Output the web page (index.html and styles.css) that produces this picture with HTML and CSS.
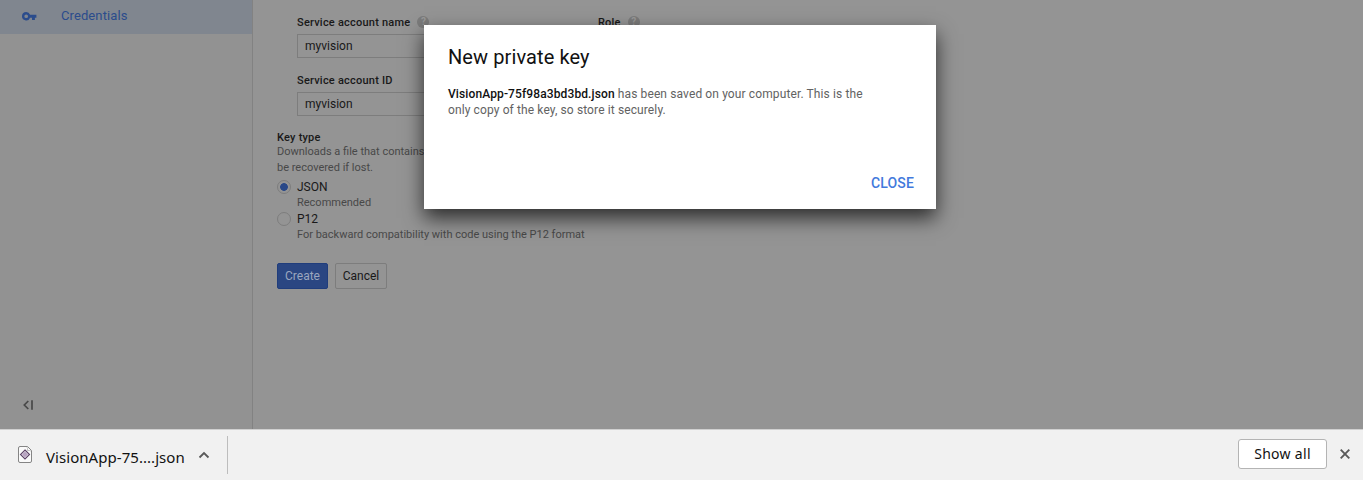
FILE: index.html
```html
<!DOCTYPE html>
<html lang="en">
<head>
<meta charset="utf-8">
<title>Credentials</title>
<link rel="stylesheet" href="styles.css">
</head>
<body>
<div class="workspace">
  <nav class="sidebar">
    <div class="nav-item">
      <svg class="key" width="15" height="9" viewBox="0 0 15 9"><path fill="currentColor" fill-rule="evenodd" d="M4.2 0a4.2 4.2 0 0 1 3.9 2.800H14.4v2.900h-1.500v2.200H10V5.700H8.100A4.200 4.200 0 1 1 4.200 0zm0 2.400a1.800 1.800 0 1 0 0 3.700 1.800 1.800 0 0 0 0-3.700z"/></svg>
      <span>Credentials</span>
    </div>
    <svg class="collapse" width="10" height="10" viewBox="0 0 10 10"><path d="M5.300 1L1.300 5l4 4M9 .2v9.600" fill="none" stroke="currentColor" stroke-width="1.700"/></svg>
  </nav>
  <main class="content">
    <div class="fields">
      <div class="account">
        <div class="label">Service account name <span class="help">?</span></div>
        <div class="input">myvision</div>
        <div class="label second">Service account ID</div>
        <div class="input">myvision</div>
      </div>
      <div class="label role">Role <span class="help">?</span></div>
    </div>
    <div class="keytype">Key type</div>
    <p class="hint">Downloads a file that contains the private key. Store the file securely because this key can't<br>be recovered if lost.</p>
    <div class="option"><i class="radio checked"></i><span class="name">JSON</span></div>
    <div class="note">Recommended</div>
    <div class="option"><i class="radio"></i><span class="name">P12</span></div>
    <div class="note">For backward compatibility with code using the P12 format</div>
    <div class="actions"><span class="button primary">Create</span><span class="button">Cancel</span></div>
  </main>
</div>
<section class="dialog">
  <h1>New private key</h1>
  <p><b>VisionApp-75f98a3bd3bd.json</b> has been saved on your computer. This is the<br>only copy of the key, so store it securely.</p>
  <div class="close">CLOSE</div>
</section>
<footer class="downloads">
  <div class="file">
    <svg class="file-icon" width="14" height="17" viewBox="0 0 14 17"><path d="M2 .5h7.500l4 4V15q0 1.500-1.500 1.500H2Q.5 16.500.5 15V2Q.5.5 2 .5z" fill="#fafafa" stroke="#858585"/><path d="M9 1.200q1 1.300.5 3.300 2-.3 3.500.5" fill="#fff" stroke="#b0b0b0" stroke-width=".8"/><path d="M7 4L11.500 8.500 7 13 2.500 8.500z" fill="#eee8f0" stroke="#5d4368" stroke-width="1.100"/><path d="M7 6.200L9.300 8.500 7 10.800 4.700 8.500z" fill="#b9a4c2" stroke="#9b80a8" stroke-width=".6"/></svg>
    <span class="filename">VisionApp-75....json</span>
    <svg class="caret" width="12" height="8" viewBox="0 0 12 8"><path d="M1.500 6.500L6 2l4.500 4.500" fill="none" stroke="#5a5a5a" stroke-width="1.800"/></svg>
  </div>
  <span class="show-all">Show all</span>
  <svg class="dismiss" width="10" height="10" viewBox="0 0 10 10"><path d="M.7.700l8.600 8.600M9.300.700L.7 9.300" stroke="#5a5a5a" stroke-width="1.900"/></svg>
</footer>
</body>
</html>
```
FILE: styles.css
```css
* { box-sizing: border-box; }
body { margin: 0; width: 1363px; height: 480px; overflow: hidden; font-family: Roboto, sans-serif; font-size: 12px; color: #191919; }
.workspace { display: flex; height: 429px; background: #949494; }
.sidebar { width: 253px; border-right: 1px solid #828282; background: #929292; display: flex; flex-direction: column; justify-content: space-between; align-items: flex-start; }
.nav-item { width: 252px; height: 34px; background: #80868f; color: #2b4c8c; display: flex; align-items: center; padding: 0 0 2px 22px; font-size: 13px; letter-spacing: .1px; }
.nav-item span { padding-bottom: 1px; }
.key { margin-right: 24px; }
.collapse { margin: 0 0 19px 23px; color: #484848; }
.content { flex: 1; padding: 14px 0 0 24px; white-space: nowrap; }
.fields { display: flex; padding-left: 20px; }
.account { width: 301px; }
.label { display: flex; align-items: center; height: 16px; font-size: 11px; font-weight: 500; letter-spacing: .22px; }
.role { letter-spacing: .2px; }
.help { margin-left: 7px; width: 12px; height: 12px; border-radius: 50%; background: #7b7b7b; color: #989898; text-align: center; font: bold 10px/12px Roboto, sans-serif; letter-spacing: 0; }
.input { width: 280px; height: 24px; margin-top: 4px; padding: 0 7px; border: 1px solid #7d7d7d; line-height: 22px; }
.second { margin-top: 14px; }
.keytype { margin-top: 14px; height: 14px; font-size: 11px; line-height: 16px; font-weight: 500; letter-spacing: .22px; }
.hint { margin: 0 0 3px; font-size: 11px; line-height: 16px; color: #484848; }
.option { display: flex; align-items: center; height: 16px; }
.radio { width: 14px; height: 14px; border: 1px solid #7d7d7d; border-radius: 50%; margin-right: 6px; }
.checked { background: radial-gradient(circle, #294888 0 3.500px, transparent 4.200px); }
.note { height: 16px; padding-left: 20px; font-size: 11px; line-height: 15px; color: #484848; }
.actions { display: flex; gap: 7px; margin-top: 20px; }
.button { width: 52px; height: 26px; border: 1px solid #7d7d7d; border-radius: 2px; text-align: center; line-height: 24px; }
.primary { width: 51px; color: #9ba6bf; border-color: #203d7c; background: #2a4682; }
.dialog { position: absolute; left: 424px; top: 25px; width: 512px; height: 184px; padding: 20px 22px 18px 24px; background: #fff; box-shadow: 0 9px 19px rgba(0,0,0,.7); display: flex; flex-direction: column; }
.dialog h1 { margin: 0; font-size: 20px; line-height: 24px; font-weight: 400; letter-spacing: .1px; color: #111; }
.dialog p { margin: 17px 0 0; line-height: 16px; letter-spacing: .115px; color: #626262; white-space: nowrap; }
.dialog b { font-weight: 500; color: #111; }
.close { margin-top: auto; align-self: flex-end; font-size: 14px; line-height: 16px; font-weight: 500; letter-spacing: .15px; color: #4279dc; }
.downloads { height: 51px; border-top: 1px solid #d0d0d0; background: #f1f1f1; display: flex; align-items: center; font-family: "Noto Sans", sans-serif; color: #111; padding-right: 13px; }
.file { width: 228px; height: 38px; border-right: 1px solid #bdbdbd; display: flex; align-items: center; padding-left: 18px; }
.file-icon { margin-right: 14px; position: relative; top: -1px; }
.filename { width: 139px; font-size: 15px; line-height: 38px; letter-spacing: .05px; padding-top: 4px; white-space: nowrap; }
.caret { margin-left: 13px; }
.show-all { margin-left: auto; width: 89px; height: 30px; border: 1px solid #b4b4b4; border-radius: 3px; background: #fff; line-height: 27px; text-align: center; font-size: 14px; letter-spacing: .3px; margin-bottom: 2px; }
.dismiss { margin-left: 13px; margin-bottom: 2px; }
```
